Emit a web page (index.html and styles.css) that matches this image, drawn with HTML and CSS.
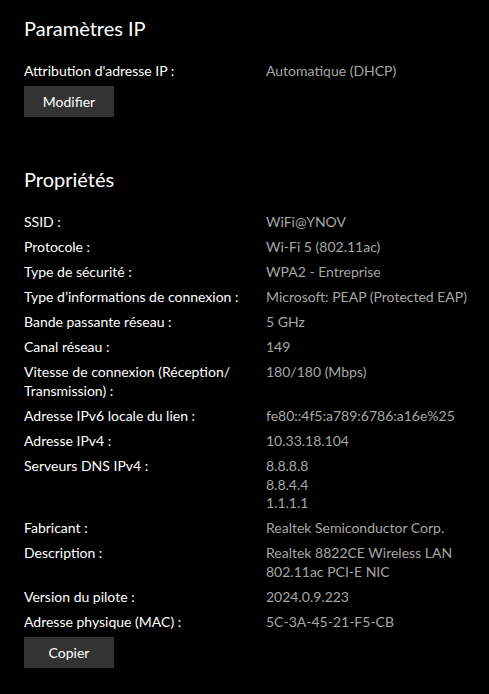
FILE: index.html
```html
<!DOCTYPE html>
<html lang="fr">
<head>
<meta charset="utf-8">
<title>Paramètres IP</title>
<link rel="stylesheet" href="styles.css">
</head>
<body>
<main class="page">
  <section class="section">
    <h2 class="title">Paramètres IP</h2>
    <dl class="props">
      <div class="row"><dt>Attribution d'adresse IP :</dt><dd>Automatique (DHCP)</dd></div>
    </dl>
    <button class="btn" type="button">Modifier</button>
  </section>
  <section class="section section-props">
    <h2 class="title">Propriétés</h2>
    <dl class="props">
      <div class="row"><dt>SSID :</dt><dd>WiFi@YNOV</dd></div>
      <div class="row"><dt>Protocole :</dt><dd>Wi-Fi 5 (802.11ac)</dd></div>
      <div class="row"><dt>Type de sécurité :</dt><dd>WPA2 - Entreprise</dd></div>
      <div class="row"><dt>Type d’informations de connexion :</dt><dd>Microsoft: PEAP (Protected EAP)</dd></div>
      <div class="row"><dt>Bande passante réseau :</dt><dd>5 GHz</dd></div>
      <div class="row"><dt>Canal réseau :</dt><dd>149</dd></div>
      <div class="row"><dt>Vitesse de connexion (Réception/<br>Transmission) :</dt><dd>180/180 (Mbps)</dd></div>
      <div class="row"><dt>Adresse IPv6 locale du lien :</dt><dd>fe80::4f5:a789:6786:a16e%25</dd></div>
      <div class="row"><dt>Adresse IPv4 :</dt><dd>10.33.18.104</dd></div>
      <div class="row"><dt>Serveurs DNS IPv4 :</dt><dd>8.8.8.8<br>8.8.4.4<br>1.1.1.1</dd></div>
      <div class="row"><dt>Fabricant :</dt><dd>Realtek Semiconductor Corp.</dd></div>
      <div class="row"><dt>Description :</dt><dd>Realtek 8822CE Wireless LAN<br>802.11ac PCI-E NIC</dd></div>
      <div class="row"><dt>Version du pilote :</dt><dd>2024.0.9.223</dd></div>
      <div class="row"><dt>Adresse physique (MAC) :</dt><dd>5C-3A-45-21-F5-CB</dd></div>
    </dl>
    <button class="btn" type="button">Copier</button>
  </section>
</main>
</body>
</html>
```

FILE: styles.css
```css
* { box-sizing: border-box; }
html, body { margin: 0; padding: 0; background: #000; }
body {
  font-family: Lato, "Noto Sans", sans-serif;
  font-size: 14px;
  color: #fff;
}
.page {
  padding: 14px 24px 0;
}
.section-props {
  margin-top: 48px;
}
.title {
  margin: 0 0 20px;
  font-size: 20px;
  font-weight: 400;
  line-height: 28px;
}
.props {
  margin: 0;
  display: flex;
  flex-direction: column;
  gap: 6.5px;
}
.row {
  display: grid;
  grid-template-columns: 230px 1fr;
  column-gap: 12px;
  line-height: 18.6px;
}
.row dt { margin: 0; color: #fff; white-space: nowrap; }
.row dd { margin: 0; color: #a6a6a6; white-space: nowrap; }
.btn {
  display: block;
  margin-top: 5px;
  width: 90px;
  height: 31px;
  border: 0;
  padding: 0;
  background: #333;
  color: #fff;
  font-family: inherit;
  font-size: 14px;
}
```
